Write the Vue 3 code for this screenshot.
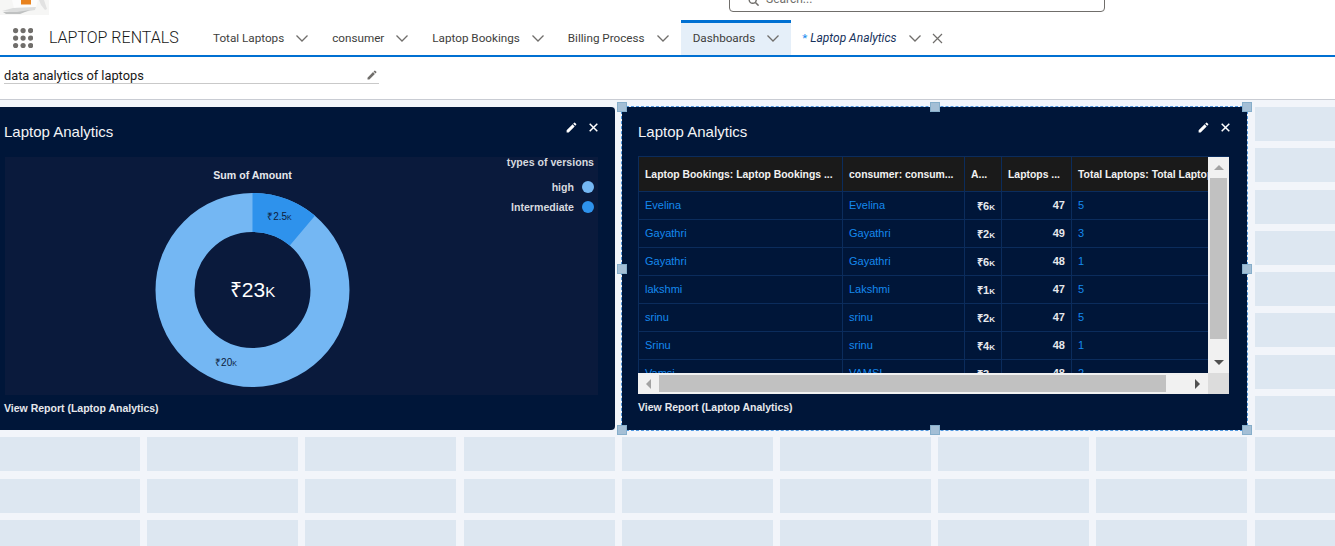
<script setup>
const tabs = ['Total Laptops', 'consumer', 'Laptop Bookings', 'Billing Process']

const rows = [
  ['Evelina', 'Evelina', '₹6k', 47, 5],
  ['Gayathri', 'Gayathri', '₹2k', 49, 3],
  ['Gayathri', 'Gayathri', '₹6k', 48, 1],
  ['lakshmi', 'Lakshmi', '₹1k', 47, 5],
  ['srinu', 'srinu', '₹2k', 47, 5],
  ['Srinu', 'srinu', '₹4k', 48, 1],
  ['Vamsi', 'VAMSI', '₹3k', 48, 2]
]

const tiles = 99
const handles = [
  { x: 0, y: 0 }, { x: 50, y: 0 }, { x: 100, y: 0 },
  { x: 0, y: 50 }, { x: 100, y: 50 },
  { x: 0, y: 100 }, { x: 50, y: 100 }, { x: 100, y: 100 }
]

const pencil = 'M3 17.25V21h3.75L17.81 9.94l-3.75-3.75L3 17.25zM20.71 7.04a1 1 0 000-1.41l-2.34-2.34a1 1 0 00-1.41 0l-1.83 1.83 3.75 3.75 1.83-1.83z'

// donut
const radius = 77.5
const circumference = 2 * Math.PI * radius
const segment = (40 / 360) * circumference
</script>

<template>
  <div class="page">
    <div class="top">
      <svg class="logo" width="49" height="15" viewBox="0 0 49 15">
        <rect width="49" height="15" fill="#f6f6f5" />
        <polygon points="12,0 38,0 36,7 14,8" fill="#fcfcfc" />
        <polygon points="2,11 13,8 36,7 35,10 17,13" fill="#dcdddd" />
        <polygon points="3,12 17,12 30,10 20,14 6,14" fill="#bfc1c1" />
        <rect x="21" width="10" height="4.5" fill="#e8821e" />
        <polygon points="39,0 44,0 47,9 45,10 41,5" fill="#e2e2e2" />
      </svg>
      <div class="search">
        <svg width="11" height="11" viewBox="0 0 14 14" class="search-icon">
          <circle cx="6" cy="6" r="4.5" fill="none" stroke="#706e6b" stroke-width="1.8" />
          <line x1="9.5" y1="9.5" x2="13.5" y2="13.5" stroke="#706e6b" stroke-width="2" />
        </svg>
        <span>Search...</span>
      </div>
    </div>

    <nav class="nav">
      <svg class="launcher" width="20" height="20" viewBox="0 0 20 20">
        <template v-for="r in 3" :key="r">
          <circle v-for="c in 3" :key="c" :cx="(c - 1) * 7.5 + 2.6" :cy="(r - 1) * 7.5 + 2.6" r="2.6" fill="#706e6b" />
        </template>
      </svg>
      <span class="app-name">LAPTOP RENTALS</span>
      <div v-for="t in tabs" :key="t" class="tab">
        <span>{{ t }}</span>
        <svg class="chev" width="12" height="7" viewBox="0 0 12 7"><polyline points="0.5,0.5 6,6 11.5,0.5" /></svg>
      </div>
      <div class="tab active">
        <span>Dashboards</span>
        <svg class="chev" width="12" height="7" viewBox="0 0 12 7"><polyline points="0.5,0.5 6,6 11.5,0.5" /></svg>
      </div>
      <div class="tab open">
        <span><b class="star">*</b> <i>Laptop Analytics</i></span>
        <svg class="chev" width="12" height="7" viewBox="0 0 12 7"><polyline points="0.5,0.5 6,6 11.5,0.5" /></svg>
        <svg class="tab-close" width="11" height="11" viewBox="0 0 11 11">
          <path d="M1 1l9 9M10 1l-9 9" />
        </svg>
      </div>
    </nav>

    <div class="subbar">
      <div class="name-field">
        <span>data analytics of laptops</span>
        <svg width="12" height="12" viewBox="0 0 24 24"><path :d="pencil" fill="#706e6b" /></svg>
      </div>
    </div>

    <main class="canvas">
      <div class="tiles">
        <div v-for="n in tiles" :key="n" class="tile"></div>
      </div>

      <section class="widget widget-left">
        <header class="widget-head">
          <h2>Laptop Analytics</h2>
          <div class="actions">
            <svg width="13" height="13" viewBox="0 0 24 24"><path :d="pencil" fill="#fff" /></svg>
            <svg class="x" width="9" height="9" viewBox="0 0 9 9"><path d="M.7.7l7.6 7.6M8.3.7L.7 8.3" /></svg>
          </div>
        </header>
        <div class="chart">
          <svg class="donut" width="593" height="238" viewBox="0 0 593 238">
            <text x="247.5" y="22" text-anchor="middle" class="chart-title">Sum of Amount</text>
            <circle cx="247.5" cy="133" :r="radius" fill="none" stroke="#74b7f3" stroke-width="39" />
            <circle
              cx="247.5"
              cy="133"
              :r="radius"
              fill="none"
              stroke="#2e92ec"
              stroke-width="39"
              :stroke-dasharray="`${segment} ${circumference}`"
              transform="rotate(-90 247.5 133)"
            />
            <text x="247.5" y="140" text-anchor="middle" class="chart-total">₹23k</text>
            <text x="274.5" y="63" text-anchor="middle" class="chart-slice">₹2.5k</text>
            <text x="221" y="209" text-anchor="middle" class="chart-slice">₹20k</text>
          </svg>
          <div class="legend">
            <div class="legend-title">types of versions</div>
            <div class="legend-row"><span>high</span><i class="dot dot-high"></i></div>
            <div class="legend-row"><span>Intermediate</span><i class="dot dot-mid"></i></div>
          </div>
        </div>
        <a class="report">View Report (Laptop Analytics)</a>
      </section>

      <section class="widget widget-right">
        <header class="widget-head">
          <h2>Laptop Analytics</h2>
          <div class="actions">
            <svg width="13" height="13" viewBox="0 0 24 24"><path :d="pencil" fill="#fff" /></svg>
            <svg class="x" width="9" height="9" viewBox="0 0 9 9"><path d="M.7.7l7.6 7.6M8.3.7L.7 8.3" /></svg>
          </div>
        </header>
        <div class="table-box">
          <div class="table-clip">
            <table>
              <colgroup>
                <col style="width: 204px" />
                <col style="width: 122px" />
                <col style="width: 37px" />
                <col style="width: 70px" />
                <col style="width: 160px" />
              </colgroup>
              <thead>
                <tr>
                  <th>Laptop Bookings: Laptop Bookings ...</th>
                  <th>consumer: consum...</th>
                  <th>A...</th>
                  <th>Laptops ...</th>
                  <th class="wide">Total Laptops: Total Laptops</th>
                </tr>
              </thead>
              <tbody>
                <tr v-for="(row, i) in rows" :key="i">
                  <td class="link">{{ row[0] }}</td>
                  <td class="link">{{ row[1] }}</td>
                  <td class="num money">{{ row[2] }}</td>
                  <td class="num">{{ row[3] }}</td>
                  <td class="link">{{ row[4] }}</td>
                </tr>
              </tbody>
            </table>
          </div>
          <div class="vbar">
            <i class="arrow arrow-up"></i>
            <div class="vthumb"></div>
            <i class="arrow arrow-down"></i>
          </div>
          <div class="hbar">
            <i class="arrow arrow-left"></i>
            <div class="hthumb"></div>
            <i class="arrow arrow-right"></i>
          </div>
          <div class="corner"></div>
        </div>
        <a class="report">View Report (Laptop Analytics)</a>
        <i
          v-for="(h, i) in handles"
          :key="i"
          class="handle"
          :style="{ left: h.x + '%', top: h.y + '%' }"
        ></i>
      </section>
    </main>
  </div>
</template>

<style>
html,
body {
  margin: 0;
  overflow: hidden;
  background: #fff;
}
</style>

<style scoped>
.page {
  width: 1335px;
  height: 546px;
  overflow: hidden;
  font-family: Roboto, "Liberation Sans", sans-serif;
  color: #2b2826;
}

.top {
  height: 20px;
  position: relative;
  overflow: hidden;
}

.logo {
  display: block;
}

.search {
  position: absolute;
  left: 729px;
  top: -21px;
  width: 356px;
  height: 26px;
  border: 1px solid #706e6b;
  border-radius: 4px;
  display: flex;
  align-items: flex-end;
  gap: 7px;
  padding: 0 0 5px 18px;
  box-sizing: content-box;
  font-size: 12px;
  line-height: 14px;
  color: #706e6b;
}

.nav {
  height: 35px;
  border-bottom: 2px solid #0070d2;
  display: flex;
  align-items: stretch;
  padding-left: 13px;
  font-size: 11.7px;
}

.launcher {
  align-self: center;
  margin: 1px 16px 0 0;
}

.app-name {
  align-self: center;
  font-size: 16px;
  font-weight: 300;
  margin-right: 22px;
  width: 130px;
  white-space: nowrap;
  color: #181818;
}

.tab {
  display: flex;
  align-items: center;
  gap: 12px;
  padding: 0 12px;
  white-space: nowrap;
  color: #3e3e3c;
}

.tab.active {
  background: #e5eff9;
  box-shadow: inset 0 3px 0 #0070d2;
}

.tab.active span {
  margin-top: 1px;
}

.tab.open {
  padding-left: 11px;
  color: #16325c;
}

.tab.open i {
  font-size: 12px;
}

.star {
  color: #1589ee;
  font-weight: 400;
}

.chev {
  margin-top: 2px;
  fill: none;
  stroke: #706e6b;
  stroke-width: 1.3;
}

.tab-close {
  margin: 1px 0 0 -1px;
  fill: none;
  stroke: #706e6b;
  stroke-width: 1.2;
}

.subbar {
  height: 43px;
  box-sizing: border-box;
  border-bottom: 1px solid #c9ccd3;
  padding: 10px 0 0 4px;
}

.name-field {
  width: 375px;
  height: 17px;
  box-sizing: border-box;
  border-bottom: 1px solid #c9c9c9;
  display: flex;
  align-items: center;
  justify-content: space-between;
  padding: 0 1px 0 0;
  font-size: 12.8px;
  color: #181818;
}

.canvas {
  position: relative;
  height: 446px;
  background: #f2f5fa;
  overflow: hidden;
}

.tiles {
  display: grid;
  grid-template-columns: repeat(9, 151px);
  grid-auto-rows: 34px;
  column-gap: 7.2px;
  row-gap: 7.3px;
  margin-left: -11px;
  padding-top: 7px;
}

.tile {
  background: #dde7f1;
}

.widget {
  position: absolute;
  top: 7px;
  box-sizing: border-box;
  background: #001639;
  height: 323px;
}

.widget-left {
  left: -10px;
  width: 625px;
  padding-left: 14px;
  border-radius: 4px;
}

.widget-right {
  left: 622px;
  width: 625px;
  padding-left: 16px;
  outline: 1px dashed #4f97de;
}

.widget-head {
  height: 50px;
  position: relative;
}

.widget-head h2 {
  margin: 0;
  padding-top: 16px;
  font: 400 15px/18px "Liberation Sans", Arial, sans-serif;
  color: #f3f4f6;
}

.actions {
  position: absolute;
  top: 14px;
  display: flex;
  align-items: center;
  gap: 11px;
}

.x {
  fill: none;
  stroke: #fff;
  stroke-width: 1.5;
}

.widget-left .actions {
  right: 0;
}

.widget-left .widget-head {
  width: 594px;
}

.widget-right .widget-head {
  width: 593px;
}

.widget-right .actions {
  right: 1px;
}

.chart {
  position: relative;
  height: 238px;
  margin-left: 1px;
  background: #0a1a3c;
  width: 593px;
}

.donut {
  display: block;
}

.donut text {
  font-family: "Liberation Sans", Arial, sans-serif;
}

.chart-title {
  font-size: 10.6px;
  font-weight: 700;
  fill: #e6e8ec;
}

.chart-total {
  font-size: 21px;
  fill: #fff;
  font-variant: small-caps;
}

.chart-slice {
  font-size: 10px;
  fill: #0c1c3c;
  font-variant: small-caps;
}

.legend {
  position: absolute;
  right: 4px;
  top: -1px;
  display: flex;
  flex-direction: column;
  align-items: flex-end;
  font: 700 10.6px/13px "Liberation Sans", Arial, sans-serif;
  color: #d6d9df;
}

.legend-title {
  margin-bottom: 8px;
}

.legend-row {
  display: flex;
  align-items: center;
  gap: 8px;
  height: 20px;
  white-space: nowrap;
}

.dot {
  width: 12px;
  height: 12px;
  border-radius: 50%;
}

.dot-high {
  background: #74b7f3;
}

.dot-mid {
  background: #2e92ec;
}

.report {
  display: block;
  margin-top: 6px;
  font: 700 10.5px/14px "Liberation Sans", Arial, sans-serif;
  color: #e6e8ec;
  white-space: nowrap;
}

.table-box {
  width: 591px;
  height: 237px;
  display: grid;
  grid-template-columns: 570px 21px;
  grid-template-rows: 216px 21px;
  font-family: "Liberation Sans", Arial, sans-serif;
  box-shadow: 0 -1px 0 #0b2c5c;
}

.table-clip {
  overflow: hidden;
}

table {
  border-collapse: collapse;
  table-layout: fixed;
  width: 593px;
  font-size: 11px;
  border-left: 1px solid #0b2c5c;
}

th {
  height: 34px;
  padding: 1px 0 0 6px;
  background: #1a1a1a;
  color: #f2f2f2;
  font-size: 10.4px;
  font-weight: 700;
  text-align: left;
  white-space: nowrap;
  overflow: hidden;
  box-sizing: border-box;
  border-right: 1px solid #0b2c5c;
  border-bottom: 1px solid #0b2c5c;
}

td {
  height: 28px;
  padding: 0 6px;
  box-sizing: border-box;
  border-right: 1px solid #0b2c5c;
  border-bottom: 1px solid #0b2c5c;
}

.link {
  color: #1589ee;
}

.num {
  text-align: right;
  font-weight: 700;
  color: #e6e8ec;
}

.money {
  font-variant: small-caps;
}

.vbar {
  background: #f1f1f1;
  display: flex;
  flex-direction: column;
  align-items: center;
  justify-content: space-between;
  position: relative;
}

.vthumb {
  position: absolute;
  top: 21px;
  left: 2px;
  width: 17px;
  height: 161px;
  background: #c1c1c1;
}

.hbar {
  background: #f1f1f1;
  position: relative;
  display: flex;
  align-items: center;
  justify-content: space-between;
}

.hthumb {
  position: absolute;
  left: 21px;
  top: 2px;
  width: 507px;
  height: 17px;
  background: #c1c1c1;
}

.corner {
  background: #dcdcdc;
}

.arrow {
  width: 0;
  height: 0;
  border-style: solid;
  border-color: transparent;
}

.arrow-up {
  margin-top: 8px;
  border-width: 0 5px 5px;
  border-bottom-color: #a3a3a3;
}

.arrow-down {
  margin-bottom: 8px;
  border-width: 5px 5px 0;
  border-top-color: #505050;
}

.arrow-left {
  margin-left: 8px;
  border-width: 5px 5px 5px 0;
  border-right-color: #a3a3a3;
}

.arrow-right {
  margin-right: 8px;
  border-width: 5px 0 5px 5px;
  border-left-color: #505050;
}

.handle {
  position: absolute;
  width: 10px;
  height: 10px;
  margin: -5px 0 0 -5px;
  box-sizing: border-box;
  background: #a4bfd6;
  border: 1px solid #86aeca;
}
</style>
